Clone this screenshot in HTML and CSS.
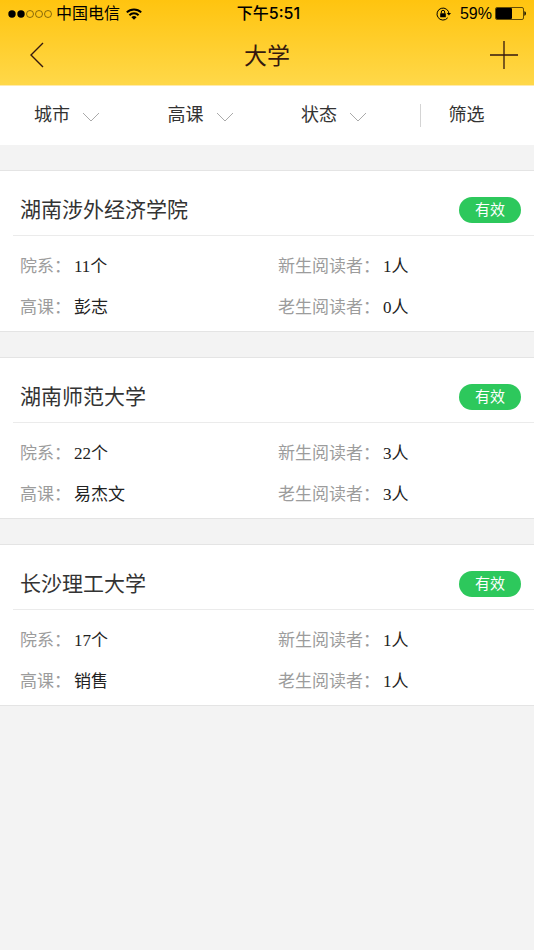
FILE: index.html
```html
<!DOCTYPE html>
<html lang="zh-CN">
<head>
<meta charset="utf-8">
<meta name="viewport" content="width=device-width, initial-scale=1">
<title>大学</title>
<link rel="stylesheet" href="styles.css">
</head>
<body>
<header class="top">
  <div class="status">
    <div class="status-left">
      <svg class="signal" width="44" height="10" viewBox="0 0 44 10" aria-hidden="true">
        <g fill="#000"><circle cx="4" cy="5" r="3.7"/><circle cx="13" cy="5" r="3.7"/></g>
        <g fill="none" stroke="#3a2c00" stroke-width=".6"><circle cx="22" cy="5" r="3.5"/><circle cx="31" cy="5" r="3.5"/><circle cx="40" cy="5" r="3.5"/></g>
      </svg>
      <span class="carrier">中国电信</span>
      <svg class="wifi" width="16" height="12" viewBox="0 0 16 12" aria-hidden="true">
        <g fill="none" stroke="#000" stroke-width="2"><path d="M.8 4.4a10.4 10.4 0 0 1 14.4 0"/><path d="M3.4 7.2a6.6 6.6 0 0 1 9.2 0"/></g>
        <path d="M8 11.8 5.4 9.2a3.7 3.7 0 0 1 5.2 0z"/>
      </svg>
    </div>
    <span class="time">下午5:51</span>
    <div class="status-right">
      <svg width="16" height="14" viewBox="0 0 16 14" aria-hidden="true">
        <path d="M11.7 10.8A6 6 0 1 1 13 7" fill="none" stroke="#000" stroke-width="1"/>
        <path d="M10.8 6h4.2l-2.1 2.6z"/>
        <rect x="4.2" y="6.2" width="5.6" height="4" rx=".5"/>
        <path d="M5.3 6.4V5a1.7 1.7 0 0 1 3.4 0v1.4" fill="none" stroke="#000" stroke-width="1"/>
      </svg>
      <span class="percent">59%</span>
      <svg width="31" height="13" viewBox="0 0 31 13" aria-hidden="true">
        <rect x=".5" y=".5" width="28" height="12" rx="1.5" fill="none" stroke="#3a2c00" stroke-width=".8"/>
        <rect x="1" y="1" width="16" height="11" rx="1"/>
        <path d="M29.4 4.3c2 .5 2 3.9 0 4.4z"/>
      </svg>
    </div>
  </div>
  <div class="nav">
    <button class="icon-btn" type="button" aria-label="返回">
      <svg width="14" height="26" viewBox="0 0 14 26"><path d="M13 1 1 13l12 12" fill="none" stroke="#35190f" stroke-width="1.4"/></svg>
    </button>
    <h1 class="title">大学</h1>
    <button class="icon-btn add" type="button" aria-label="添加">
      <svg width="28" height="28" viewBox="0 0 28 28"><path d="M14 0v28M0 14h28" fill="none" stroke="#35190f" stroke-width="1.3"/></svg>
    </button>
  </div>
</header>
<nav class="filters">
  <button class="filter" type="button">城市<svg class="chevron" width="18" height="10" viewBox="0 0 18 10"><path d="m1 1 8 8 8-8"/></svg></button>
  <button class="filter" type="button">高课<svg class="chevron" width="18" height="10" viewBox="0 0 18 10"><path d="m1 1 8 8 8-8"/></svg></button>
  <button class="filter" type="button">状态<svg class="chevron" width="18" height="10" viewBox="0 0 18 10"><path d="m1 1 8 8 8-8"/></svg></button>
  <div class="more"><button class="filter" type="button">筛选</button></div>
</nav>
<main class="list">
  <article class="card">
    <div class="card-head"><h2 class="name">湖南涉外经济学院</h2><span class="badge">有效</span></div>
    <dl class="facts">
      <div class="fact"><dt>院系：</dt><dd>11个</dd></div>
      <div class="fact"><dt>新生阅读者：</dt><dd>1人</dd></div>
      <div class="fact"><dt>高课：</dt><dd>彭志</dd></div>
      <div class="fact"><dt>老生阅读者：</dt><dd>0人</dd></div>
    </dl>
  </article>
  <article class="card">
    <div class="card-head"><h2 class="name">湖南师范大学</h2><span class="badge">有效</span></div>
    <dl class="facts">
      <div class="fact"><dt>院系：</dt><dd>22个</dd></div>
      <div class="fact"><dt>新生阅读者：</dt><dd>3人</dd></div>
      <div class="fact"><dt>高课：</dt><dd>易杰文</dd></div>
      <div class="fact"><dt>老生阅读者：</dt><dd>3人</dd></div>
    </dl>
  </article>
  <article class="card">
    <div class="card-head"><h2 class="name">长沙理工大学</h2><span class="badge">有效</span></div>
    <dl class="facts">
      <div class="fact"><dt>院系：</dt><dd>17个</dd></div>
      <div class="fact"><dt>新生阅读者：</dt><dd>1人</dd></div>
      <div class="fact"><dt>高课：</dt><dd>销售</dd></div>
      <div class="fact"><dt>老生阅读者：</dt><dd>1人</dd></div>
    </dl>
  </article>
</main>
</body>
</html>
```

FILE: styles.css
```css
* {
  box-sizing: border-box;
}

body {
  margin: 0;
  background: #f3f3f3;
  color: #333;
  font-family: "Liberation Sans", "Noto Sans CJK SC", sans-serif;
}

button {
  padding: 0;
  border: 0;
  background: none;
  color: inherit;
  font: inherit;
}

svg {
  display: block;
  flex: none;
}

.top {
  background: linear-gradient(#ffc40f, #ffd849);
  border-bottom: 1px solid #ffebac;
}

.status {
  display: grid;
  grid-template-columns: 1fr auto 1fr;
  align-items: center;
  height: 27px;
  padding: 0 8px;
  color: #000;
  font-size: 16px;
  line-height: 27px;
}

.status-left,
.status-right {
  display: flex;
  align-items: center;
}

.carrier {
  margin: 0 6px 0 4px;
}

.status-right {
  justify-content: flex-end;
}

.time {
  padding-left: 3px;
  font-family: Inter, "Noto Sans CJK SC", sans-serif;
  font-size: 16px;
  font-weight: 500;
}

.percent {
  margin: 0 3px 0 8px;
}

.nav {
  display: grid;
  grid-template-columns: 1fr auto 1fr;
  align-items: center;
  height: 58px;
  padding: 0 16px 2px 30px;
}

.title {
  margin: 0;
  padding: 1px 14px 0 0;
  color: #35190f;
  font-size: 23px;
  font-weight: 400;
  line-height: 34px;
}

.add {
  justify-self: end;
}

.filters {
  display: grid;
  grid-template-columns: repeat(4, 1fr);
  align-items: center;
  height: 59px;
  background: #fff;
  font-size: 18px;
  line-height: 26px;
}

.filters > .filter {
  padding-left: 34px;
}

.filter {
  display: flex;
  align-items: center;
  gap: 12px;
  padding-bottom: 2px;
}

.chevron {
  margin-top: 4px;
  fill: none;
  stroke: #aaa;
}

.more {
  display: flex;
  align-items: center;
  height: 23px;
  margin-left: 19px;
  padding-left: 28px;
  border-left: 1px solid #d4d4d4;
}

.list {
  display: grid;
  gap: 25px;
  padding: 25px 0;
}

.card {
  background: #fff;
  border: solid #e4e4e4;
  border-width: 1px 0;
}

.card-head {
  display: flex;
  align-items: center;
  justify-content: space-between;
  height: 65px;
  margin-left: 13px;
  padding: 13px 13px 0 7px;
  border-bottom: 1px solid #ebebeb;
}

.name {
  margin: 0;
  font-size: 21px;
  font-weight: 400;
  line-height: 30px;
}

.badge {
  padding: 0 16px;
  border-radius: 13px;
  background: #2dc85c;
  color: #fff;
  font-size: 15px;
  line-height: 26px;
}

.facts {
  display: grid;
  grid-template-columns: 258fr 236fr;
  margin: 0;
  padding: 10px 20px 3px;
  font-family: "Liberation Serif", "Noto Sans CJK SC", serif;
  font-size: 17px;
  line-height: 41px;
}

.fact {
  display: flex;
  gap: 3px;
}

.fact dt {
  color: #9c9c9c;
}

.fact dd {
  margin: 0;
  color: #222;
}
```
